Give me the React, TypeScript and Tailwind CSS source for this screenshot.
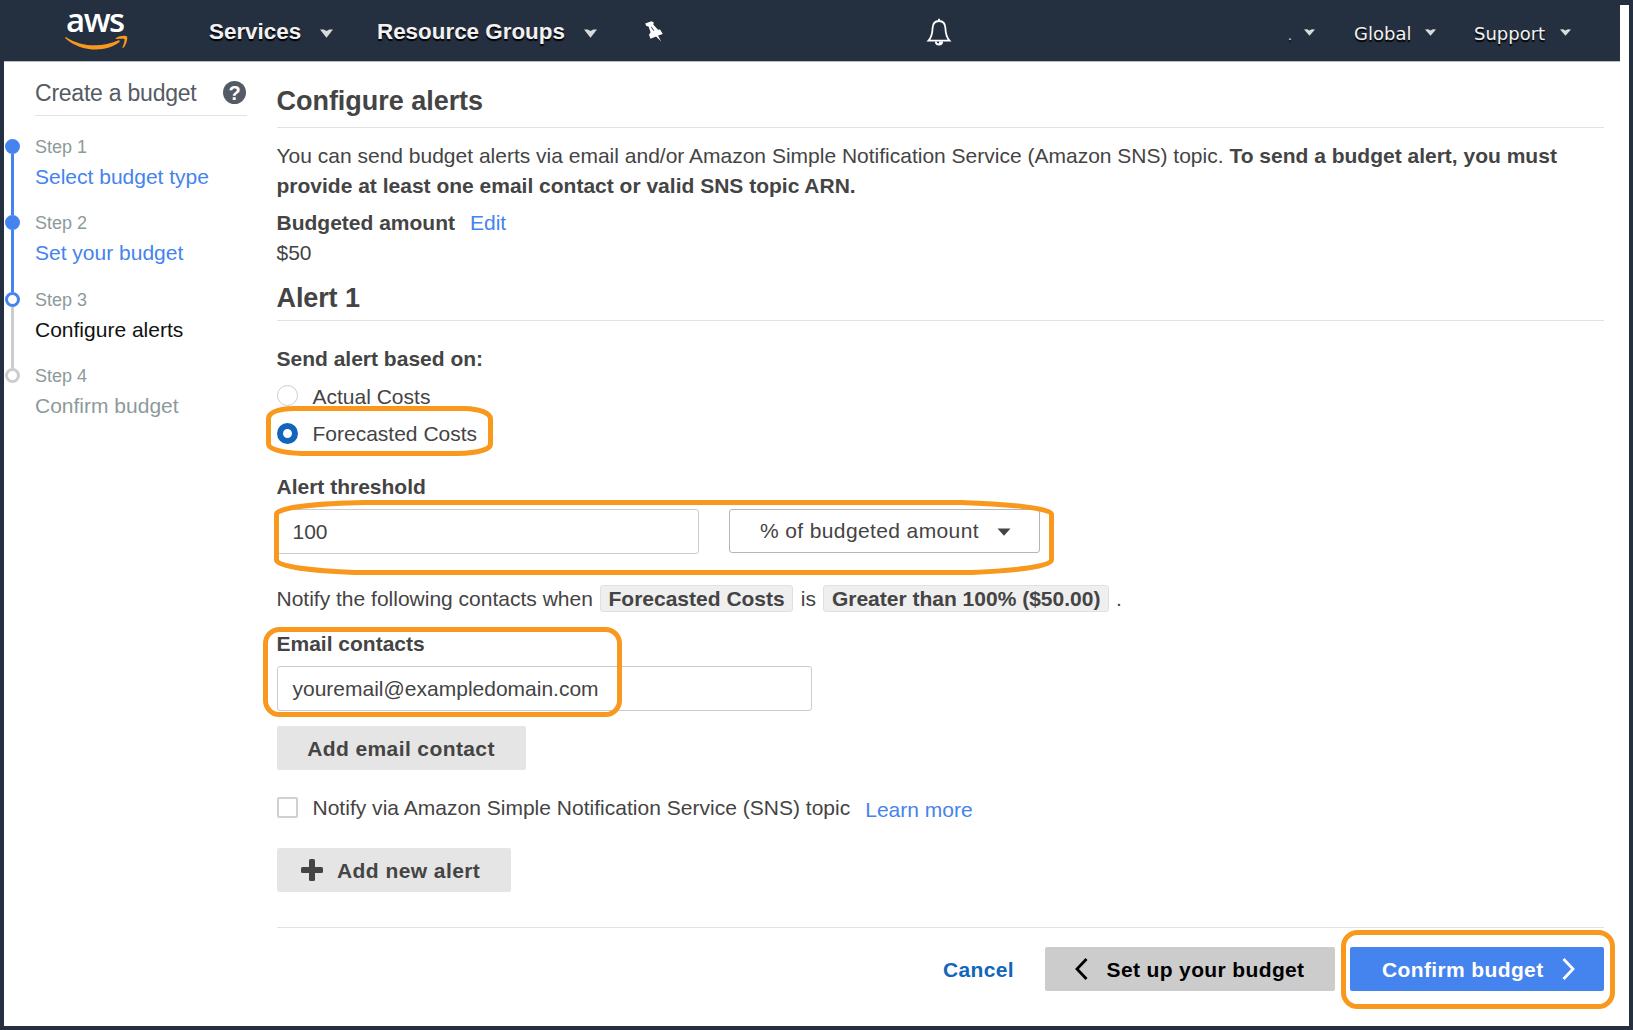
import React from "react";

function Row({ h, className = "", children }: { h: string; className?: string; children?: React.ReactNode }) {
  return <div className={`flex shrink-0 whitespace-nowrap ${h} ${className}`}>{children}</div>;
}

function Caret({ className = "" }: { className?: string }) {
  return (
    <svg viewBox="0 0 12 9" preserveAspectRatio="none" className={`shrink-0 ${className}`} fill="#d9dada">
      <path d="M0 .6 3.500.4 6 1.900 8.500.4l3.500.2L6 8.700z" />
    </svg>
  );
}

function AwsLogo() {
  return (
    <div className="relative h-[61px] w-[64px]">
      <span className="absolute left-[1px] top-0 w-[64px] font-['Open_Sans'] text-[33px] font-semibold leading-[40px] tracking-[-1.500px] text-white [text-shadow:none]">
        aws
      </span>
      <svg className="absolute left-0 top-[34px]" width="64" height="17" viewBox="0 0 64 17" fill="#f7981f">
        <path d="M1.2 3.2C10 9 19.500 11.300 30 11.300c8 0 16-1.700 23-4.800 1.300-.6 2.400.8 1.200 1.800C47.500 13.300 39.500 15.500 31 15.500 19 15.500 8.500 11.300.6 4.400c-.8-.8-.2-1.600.6-1.200z" />
        <path d="M50.800 4.200C54 1.500 61 1.200 62 2.400c.9 1.300-.4 8.500-3.700 11.400-.6.4-1.100.2-.8-.5 1-2.300 2.500-7 2-8-.7-.9-5.200-.5-7.900-.2-.9 0-1.300-.4-.8-.9z" />
      </svg>
    </div>
  );
}

function Header() {
  return (
    <header className="flex h-[62px] shrink-0 border-b border-[#b9bdc3] bg-[#242f3f] text-[22.4px] font-bold leading-[63px] text-[#f1f1f1] [text-shadow:0_2px_1px_#000]">
      <div className="ml-[61px]">
        <AwsLogo />
      </div>
      <div className="ml-[80px] w-[111px]">Services</div>
      <Caret className="mt-[29px] h-[9px] w-[13px]" />
      <div className="ml-[44px] w-[207px]">Resource Groups</div>
      <Caret className="mt-[29px] h-[9px] w-[13px]" />
      <svg className="ml-[48px] mt-[21px] h-[21px] w-[18px]" viewBox="0 0 18 21" fill="#fff">
        <path d="M6.500.3 8.800 1.400 8.400 3.800l4.700 5 2-.3 2.700 4.500-4.700 1.600 3 6-5-5.200L5.500 17.800 4 13.800l1.600-2.600L3.500 5.600 1.300 5 .2 2.500z" />
        <path d="m6.300 5.800 2.500 4" stroke="#242f3f" strokeWidth=".9" />
      </svg>
      <svg className="ml-[263px] mt-[18px] h-[28px] w-[26px]" viewBox="0 0 26 28" fill="none" stroke="#fff" strokeWidth="1.800">
        <path d="M13 3C8.700 3 6.800 6.300 6.600 10c-.2 6-.8 9-4.100 12.600h21C20.200 19 19.600 16 19.400 10 19.200 6.300 17.300 3 13 3zM13 .8v2" />
        <path d="M9.800 23.500c0 4 6.400 4 6.400 0" />
        <path d="M13 23.500h3c0 2-1.300 3-3 3z" fill="#fff" stroke="none" />
      </svg>
      <div className="ml-auto mr-[49px] flex font-['DejaVu_Sans'] text-[18px] font-normal leading-[67px]">
        <span className="w-[16px] text-[12px] leading-[72px]">.</span>
        <Caret className="mt-[29px] h-[7px] w-[11px]" />
        <span className="ml-[39px] w-[71px]">Global</span>
        <Caret className="mt-[29px] h-[7px] w-[11px]" />
        <span className="ml-[38px] w-[86px]">Support</span>
        <Caret className="mt-[29px] h-[7px] w-[11px]" />
      </div>
    </header>
  );
}

const steps = [
  { title: "Select budget type", color: "text-[#4583ee]", dot: "bg-[#4583ee] border-[#4583ee]", line: "bg-[#4583ee]", h: "h-[76px]" },
  { title: "Set your budget", color: "text-[#4583ee]", dot: "bg-[#4583ee] border-[#4583ee]", line: "bg-[#4583ee]", h: "h-[77px]" },
  { title: "Configure alerts", color: "text-[#111]", dot: "bg-white border-[#4583ee]", line: "bg-[#ccc]", h: "h-[76px]" },
  { title: "Confirm budget", color: "text-[#8d9a9b]", dot: "bg-white border-[#ccc]", line: "", h: "h-[76px]" },
];

function Sidebar() {
  return (
    <aside className="w-[243px] shrink-0 pl-px">
      <div className="ml-[30px] flex h-[54px] w-[212px] justify-between border-b border-[#e2e2e2] text-[23px] leading-[63px] text-[#545b64]">
        <span className="whitespace-nowrap tracking-[-0.230px]">Create a budget</span>
        <span className="mr-px mt-[19px] flex size-[23px] items-center justify-center rounded-full bg-[#545b64] text-[20px] font-bold leading-none text-white">
          ?
        </span>
      </div>
      <ol className="mt-[23px]">
        {steps.map((s, i) => (
          <li key={s.title} className={`flex ${s.h}`}>
            <div className="flex w-[15px] flex-col items-center">
              <div className={`size-[15px] shrink-0 rounded-full border-[3px] ${s.dot}`} />
              {s.line && <div className={`w-[3px] flex-1 ${s.line}`} />}
            </div>
            <div className="ml-[15px] whitespace-nowrap">
              <div className="-mt-[6px] h-[29px] text-[18px] leading-[28px] text-[#8d9a9b]">Step {i + 1}</div>
              <div className={`h-[30px] text-[21px] leading-[29px] ${s.color}`}>{s.title}</div>
            </div>
          </li>
        ))}
      </ol>
    </aside>
  );
}

function Radio({ on, label }: { on?: boolean; label: string }) {
  return (
    <label className="flex h-[37px] shrink-0 items-start leading-[30px]">
      <span
        className={
          on
            ? "mt-[3.500px] size-[21px] rounded-full border-[6px] border-[#1166bb] bg-white"
            : "mt-[3px] size-[21px] rounded-full border-[1.500px] border-[#ccc] bg-white"
        }
      />
      <span className="ml-[15px]">{label}</span>
    </label>
  );
}

const pill = "h-[27px] rounded-[3px] border border-[#e0e0e0] bg-[#efefef] px-[7.500px] font-bold leading-[26px]";

function Main() {
  return (
    <main className="ml-[29.500px] flex w-[1327.500px] shrink-0 flex-col text-[21px] leading-[30px] text-[#444]">
      <Row h="h-[66px]" className="border-b border-[#e2e2e2]">
        <h1 className="mt-[19px] text-[27px] font-bold leading-[40px] tracking-[-0.030px]">Configure alerts</h1>
      </Row>
      <p className="mt-[13px] h-[67px] shrink-0">
        You can send budget alerts via email and/or Amazon Simple Notification Service (Amazon SNS) topic.{" "}
        <b>
          To send a budget alert, you must
          <br />
          provide at least one email contact or valid SNS topic ARN.
        </b>
      </p>
      <Row h="h-[30px]">
        <b>Budgeted amount</b>
        <a className="ml-[15px] text-[#4583ee]">Edit</a>
      </Row>
      <Row h="h-[30px]">$50</Row>
      <Row h="h-[53px]" className="border-b border-[#e2e2e2]">
        <h2 className="mt-[10px] text-[27px] font-bold leading-[40px] tracking-[-0.100px]">Alert 1</h2>
      </Row>
      <Row h="h-[61px]" className="pt-[23px] font-bold">Send alert based on:</Row>
      <Radio label="Actual Costs" />
      <Radio on label="Forecasted Costs" />
      <Row h="h-[53px]" className="pt-[16px] font-bold">Alert threshold</Row>
      <Row h="h-[76px]">
        <div className="h-[45px] w-[422.500px] rounded-[3px] border border-[#ccc] pl-[15px] leading-[44px]">100</div>
        <div className="ml-[30px] flex h-[44px] w-[311px] rounded-[3px] border border-[#b5b5b5] pl-[30px] leading-[42px] tracking-[0.380px]">
          % of budgeted amount
          <svg className="ml-[18px] mt-[18px]" width="14" height="8" viewBox="0 0 14 8" fill="#444">
            <path d="M.5.5h13L7 7.700z" />
          </svg>
        </div>
      </Row>
      <Row h="h-[44px]" className="leading-[28px]">
        <span className="w-[323.500px]">Notify the following contacts when</span>
        <span className={pill}>Forecasted Costs</span>
        <span className="mx-[7.500px]">is</span>
        <span className={pill}>Greater than 100% ($50.00)</span>
        <span className="ml-[7px]">.</span>
      </Row>
      <Row h="h-[37px]" className="font-bold">
        Email contacts
      </Row>
      <div className="h-[45px] w-[535px] shrink-0 rounded-[3px] border border-[#ccc] pl-[15px] leading-[44px]">
        youremail@exampledomain.com
      </div>
      <button className="mt-[15px] h-[44px] w-[249px] shrink-0 rounded-[2px] bg-[#e5e5e5] pt-[2px] font-bold tracking-[0.400px]">
        Add email contact
      </button>
      <Row h="h-[78px]" className="pt-[23px]">
        <span className="mt-[4px] size-[21px] rounded-[2px] border-2 border-[#d0d0d0]" />
        <span className="ml-[15px] tracking-[0.015px]">Notify via Amazon Simple Notification Service (SNS) topic</span>
        <a className="ml-[15px] mt-[2px] text-[#4583ee]">Learn more</a>
      </Row>
      <button className="flex h-[44px] w-[234px] shrink-0 items-center rounded-[2px] bg-[#e5e5e5] pl-[24px] font-bold tracking-[0.430px]">
        <svg width="22" height="22" viewBox="0 0 22 22" fill="#444">
          <rect x="8" width="6" height="22" rx="1.500" />
          <rect y="8" width="22" height="6" rx="1.500" />
        </svg>
        <span className="ml-[14.500px] mt-[2px]">Add new alert</span>
      </button>
      <div className="mt-[35px] flex h-[64px] shrink-0 items-end border-t border-[#e2e2e2] font-bold leading-[46px] tracking-[0.370px]">
        <a className="ml-auto mr-[31px] h-[44px] text-[#1166bb]">Cancel</a>
        <button className="flex h-[44px] w-[290px] items-center rounded-[2px] bg-[#ccc] pl-[30px] text-black">
          <svg width="13" height="22" viewBox="0 0 13 22" fill="none" stroke="#000" strokeWidth="2.800">
            <path d="M11.500 1 2 11l9.500 10" />
          </svg>
          <span className="ml-[18.500px] mt-[2px]">Set up your budget</span>
        </button>
        <button className="ml-[15px] flex h-[44px] w-[254px] items-center rounded-[2px] bg-[#4583ee] pl-[32px] text-white">
          <span className="mt-[2px]">Confirm budget</span>
          <svg className="ml-[18px]" width="13" height="22" viewBox="0 0 13 22" fill="none" stroke="#fff" strokeWidth="2.800">
            <path d="M1.500 1 11 11 1.500 21" />
          </svg>
        </button>
      </div>
    </main>
  );
}

/* Hand-drawn highlight outlines lying over the form. */
function Annotations() {
  return (
    <svg className="pointer-events-none absolute inset-0" width="1633" height="1030" fill="none" stroke="#f8981d" strokeWidth="5">
      <path d="M294 408.500H464C480 409 490.500 413 490.500 419V444C490.500 449 480 453 457 453.500H302C282 453 268.500 449 268.500 444V419C268.500 413 276 409 294 408.500Z" />
      <path d="M365 502.500H961C1005 504 1051.500 508 1051.500 514V560C1051.500 567 1010 571 971 572.500H355C315 571 276.500 567 276.500 560V514C276.500 508 315 503.500 365 502.500Z" />
      <rect x="265.500" y="629.500" width="354" height="85" rx="14" />
      <rect x="1343.500" y="932.500" width="269" height="74" rx="14" />
    </svg>
  );
}

export default function App() {
  return (
    <div className="relative flex h-[1030px] w-[1633px] flex-col overflow-hidden border-4 border-t-0 border-[#242f3f] bg-white font-['Liberation_Sans',sans-serif]">
      <div className="flex shrink-0 bg-[#242f3f]">
        <div className="flex-1">
          <Header />
        </div>
        <div className="mt-[5px] w-[9px] bg-white" />
      </div>
      <div className="flex">
        <Sidebar />
        <Main />
      </div>
      <div className="absolute -left-1 top-0 h-[1030px] w-[1633px]">
        <Annotations />
      </div>
    </div>
  );
}
